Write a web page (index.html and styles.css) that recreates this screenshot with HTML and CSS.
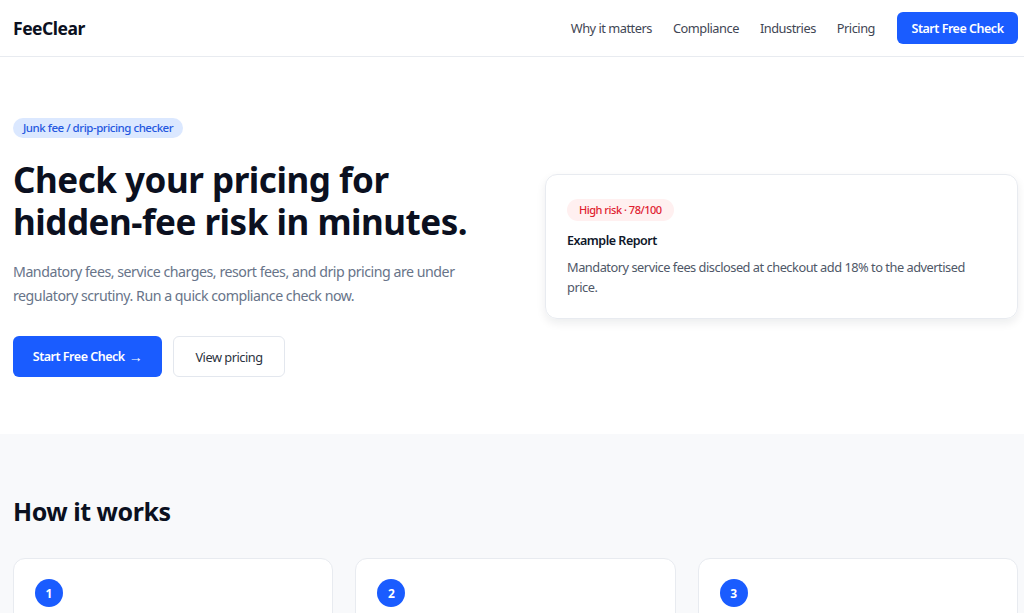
FILE: index.html
```html
<!DOCTYPE html>
<html lang="en">
<head>
  <meta charset="UTF-8" />
  <meta name="viewport" content="width=device-width, initial-scale=1.0" />
  <title>FeeClear – Junk fee checker</title>
  <link rel="stylesheet" href="styles.css">
</head>
<body>
  <header class="topbar">
    <div class="wrap topbar-inner">
      <a class="logo" href="#">FeeClear</a>
      <nav class="nav">
        <a href="#why">Why it matters</a>
        <a href="#compliance">Compliance</a>
        <a href="#industries">Industries</a>
        <a href="#pricing">Pricing</a>
        <a class="btn btn-primary btn-small" href="#check">Start Free Check</a>
      </nav>
    </div>
  </header>

  <main>
    <section class="hero">
      <div class="wrap hero-grid">
        <div class="hero-copy">
          <span class="tag">Junk fee / drip-pricing checker</span>
          <h1>Check your pricing for hidden-fee risk in minutes.</h1>
          <p class="lead">Mandatory fees, service charges, resort fees, and drip pricing are under regulatory scrutiny. Run a quick compliance check now.</p>
          <div class="actions">
            <a class="btn btn-primary" href="#check">Start Free Check <span class="arrow">→</span></a>
            <a class="btn btn-ghost" href="#pricing">View pricing</a>
          </div>
        </div>

        <div class="report">
          <span class="risk">High risk · 78/100</span>
          <h3>Example Report</h3>
          <p>Mandatory service fees disclosed at checkout add 18% to the advertised price.</p>
        </div>
      </div>
    </section>

    <section class="how">
      <div class="wrap">
        <h2>How it works</h2>
        <div class="steps">
          <div class="step"><span class="num">1</span></div>
          <div class="step"><span class="num">2</span></div>
          <div class="step"><span class="num">3</span></div>
        </div>
      </div>
    </section>
  </main>
</body>
</html>
```

FILE: styles.css
```css
html, body {
  margin: 0;
  padding: 0;
  font-family: 'Noto Sans', 'Open Sans', sans-serif;
  letter-spacing: -0.03em;
  color: #0f172a;
  background: #fff;
}

a {
  text-decoration: none;
  color: inherit;
}

.wrap {
  padding: 0 6px 0 13px;
}

/* header */
.topbar {
  border-bottom: 1px solid #e8ebf0;
}

.topbar-inner {
  display: flex;
  align-items: center;
  justify-content: space-between;
  height: 56px;
}

.logo {
  font-size: 17.5px;
  font-weight: 700;
  color: #0b1020;
}

.nav {
  display: flex;
  align-items: center;
  gap: 21px;
  font-size: 12.8px;
  color: #3f4654;
}

.btn {
  display: inline-flex;
  align-items: center;
  justify-content: center;
  border-radius: 6px;
  font-weight: 600;
  box-sizing: border-box;
}

.btn-primary {
  background: #1a5cff;
  color: #fff;
}

.btn-small {
  height: 32px;
  width: 121px;
  font-size: 12.5px;
  margin-left: 1px;
}

/* hero */
.hero {
  padding: 58px 0 57px;
}

.hero-grid {
  display: grid;
  grid-template-columns: 1fr 473px;
  gap: 58px;
  align-items: center;
}

.tag {
  display: inline-block;
  background: #dbe8ff;
  color: #2558e0;
  font-size: 11.5px;
  line-height: 14px;
  font-weight: 500;
  padding: 3px 10px;
  border-radius: 999px;
}

h1 {
  font-size: 35px;
  line-height: 42px;
  font-weight: 700;
  margin: 21px 0 17px;
  color: #0b1020;
}

.lead {
  font-size: 14.2px;
  line-height: 24px;
  color: #687489;
  margin: 0 0 28px;
}

.actions {
  display: flex;
  gap: 11px;
}

.actions .btn {
  height: 41px;
}

.actions .btn-primary {
  width: 149px;
  font-size: 12.5px;
}

.arrow {
  margin-left: 4px;
  font-size: 14px;
}

.btn-ghost {
  width: 112px;
  border: 1px solid #e3e7ee;
  color: #2c3340;
  font-size: 12.8px;
  font-weight: 400;
}

.report {
  border: 1px solid #e8ebf0;
  border-radius: 12px;
  box-shadow: 0 4px 10px rgba(15, 23, 42, 0.08);
  padding: 22px 21px 21px;
}

.risk {
  display: inline-block;
  background: #fff0f0;
  color: #e0202f;
  font-size: 11px;
  line-height: 16px;
  font-weight: 500;
  padding: 3px 12px;
  border-radius: 999px;
}

.report h3 {
  font-size: 12.5px;
  line-height: 20px;
  font-weight: 600;
  margin: 10px 0 6px;
}

.report p {
  font-size: 12.8px;
  line-height: 20px;
  color: #4f5868;
  margin: 0;
}

/* how it works */
.how {
  background: #f8f9fb;
  padding: 61px 0 40px;
}

.how h2 {
  font-size: 25px;
  line-height: 32px;
  font-weight: 700;
  margin: 0 0 31px;
  color: #0b1020;
}

.steps {
  display: grid;
  grid-template-columns: repeat(3, 1fr);
  gap: 22px;
}

.step {
  background: #fff;
  border: 1px solid #e8ebf0;
  border-radius: 12px;
  padding: 20px 21px;
  height: 120px;
}

.num {
  display: inline-flex;
  align-items: center;
  justify-content: center;
  width: 28px;
  height: 28px;
  border-radius: 50%;
  background: #1a5cff;
  color: #fff;
  font-size: 12px;
  font-weight: 700;
  letter-spacing: 0;
}
```
